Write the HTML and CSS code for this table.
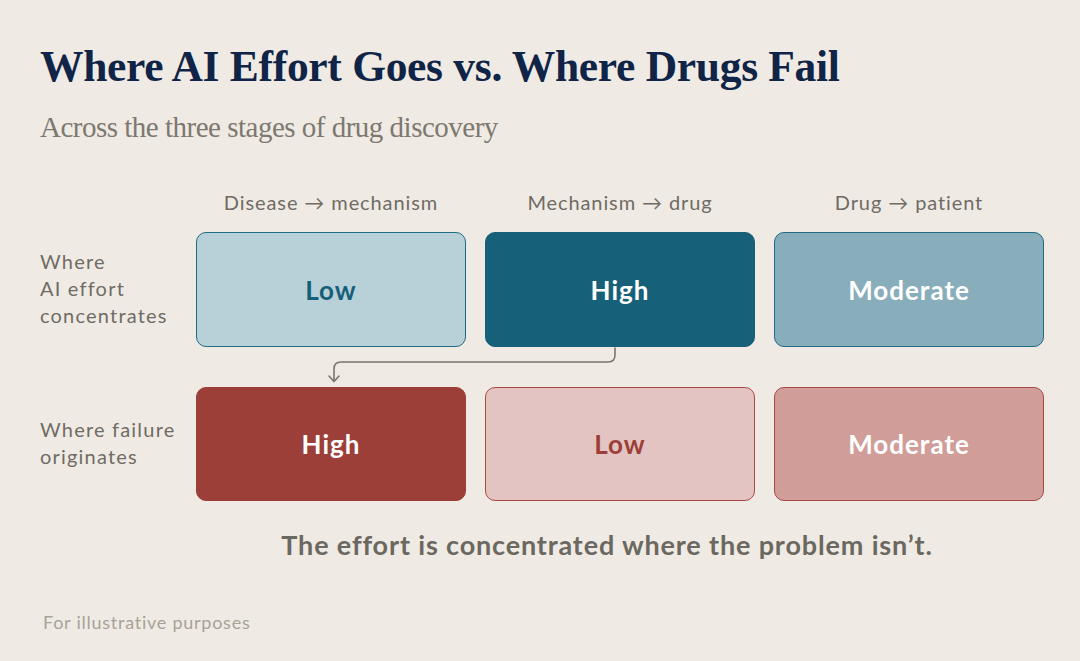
FILE: index.html
```html
<!DOCTYPE html>
<html lang="en">
<head>
<meta charset="utf-8">
<title>Where AI Effort Goes vs. Where Drugs Fail</title>
<link rel="stylesheet" href="styles.css">
</head>
<body>
<div class="page">
  <h1 class="title">Where AI Effort Goes vs. Where Drugs Fail</h1>
  <p class="subtitle">Across the three stages of drug discovery</p>

  <div class="grid">
    <div class="corner"></div>
    <div class="col-head">Disease → mechanism</div>
    <div class="col-head">Mechanism → drug</div>
    <div class="col-head">Drug → patient</div>

    <div class="row-label">Where<br>AI effort<br>concentrates</div>
    <div class="cell blue-low">Low</div>
    <div class="cell blue-high">High</div>
    <div class="cell blue-mod">Moderate</div>

    <div class="row-label second">Where failure<br>originates</div>
    <div class="cell red-high second">High</div>
    <div class="cell red-low second">Low</div>
    <div class="cell red-mod second">Moderate</div>
  </div>

  <p class="conclusion">The effort is concentrated where the problem isn’t.</p>
  <p class="footnote">For illustrative purposes</p>

  <svg class="connector" width="1080" height="661" viewBox="0 0 1080 661" fill="none" stroke="#7a756e" stroke-width="1.6" stroke-linecap="round" stroke-linejoin="round">
    <path d="M615 348 V355 Q615 362 608 362 H341 Q334 362 334 369 V381"/>
    <path d="M329 376 L334 381.5 L339 376"/>
  </svg>
</div>
</body>
</html>
```

FILE: styles.css
```css
* { box-sizing: border-box; }

html, body {
  margin: 0;
  padding: 0;
  background: #efebe4;
}

.page {
  position: relative;
  width: 1080px;
  height: 661px;
  padding: 40px 0 0 40px;
  overflow: hidden;
}

.title {
  margin: 0;
  font-family: "Liberation Serif", "DejaVu Serif", serif;
  font-weight: 700;
  font-size: 43.5px;
  line-height: 52px;
  color: #0f2447;
  letter-spacing: -0.3px;
}

.subtitle {
  margin: 18px 0 0 0;
  font-family: "Liberation Serif", "DejaVu Serif", serif;
  font-weight: 400;
  font-size: 29px;
  line-height: 34px;
  color: #7d7870;
  letter-spacing: -0.5px;
}

.grid {
  display: grid;
  grid-template-columns: 137px repeat(3, 270px);
  grid-template-rows: 42px 115px 154px;
  column-gap: 19px;
  margin-top: 46px;
}

.col-head {
  font-family: "Lato", "Liberation Sans", sans-serif;
  font-size: 20px;
  line-height: 24px;
  color: #6f6b64;
  text-align: center;
  letter-spacing: 0.9px;
}

.row-label {
  font-family: "Lato", "Liberation Sans", sans-serif;
  font-size: 20px;
  line-height: 27px;
  color: #6f6b64;
  align-self: center;
  letter-spacing: 1.2px;
  white-space: nowrap;
  margin-bottom: 3px;
}

.cell {
  display: flex;
  align-items: center;
  justify-content: center;
  border-radius: 10px;
  border: 1.5px solid;
  font-family: "Lato", "Liberation Sans", sans-serif;
  font-weight: 700;
  font-size: 26px;
  letter-spacing: 1px;
}

.second { margin-top: 40px; }

.blue-low  { background: #b8d1d8; border-color: #1f6a84; color: #155f78; }
.blue-high { background: #16607a; border-color: #16607a; color: #ffffff; }
.blue-mod  { background: #88adbb; border-color: #1f6a84; color: #ffffff; }
.red-high  { background: #9b3f38; border-color: #9b3f38; color: #ffffff; }
.red-low   { background: #e3c4c2; border-color: #a84a42; color: #9b3f38; }
.red-mod   { background: #d09d99; border-color: #a84a42; color: #ffffff; }

.conclusion {
  margin: 28px 0 0 0;
  padding-left: 94px;
  width: 1040px;
  text-align: center;
  font-family: "Lato", "Liberation Sans", sans-serif;
  font-weight: 700;
  font-size: 27px;
  line-height: 32px;
  color: #6b6861;
  letter-spacing: 0.85px;
}

.footnote {
  margin: 50px 0 0 3px;
  font-family: "Lato", "Liberation Sans", sans-serif;
  font-size: 18px;
  line-height: 22px;
  color: #a8a297;
  letter-spacing: 0.75px;
}

.connector {
  position: absolute;
  left: 0;
  top: 0;
  pointer-events: none;
}
```
